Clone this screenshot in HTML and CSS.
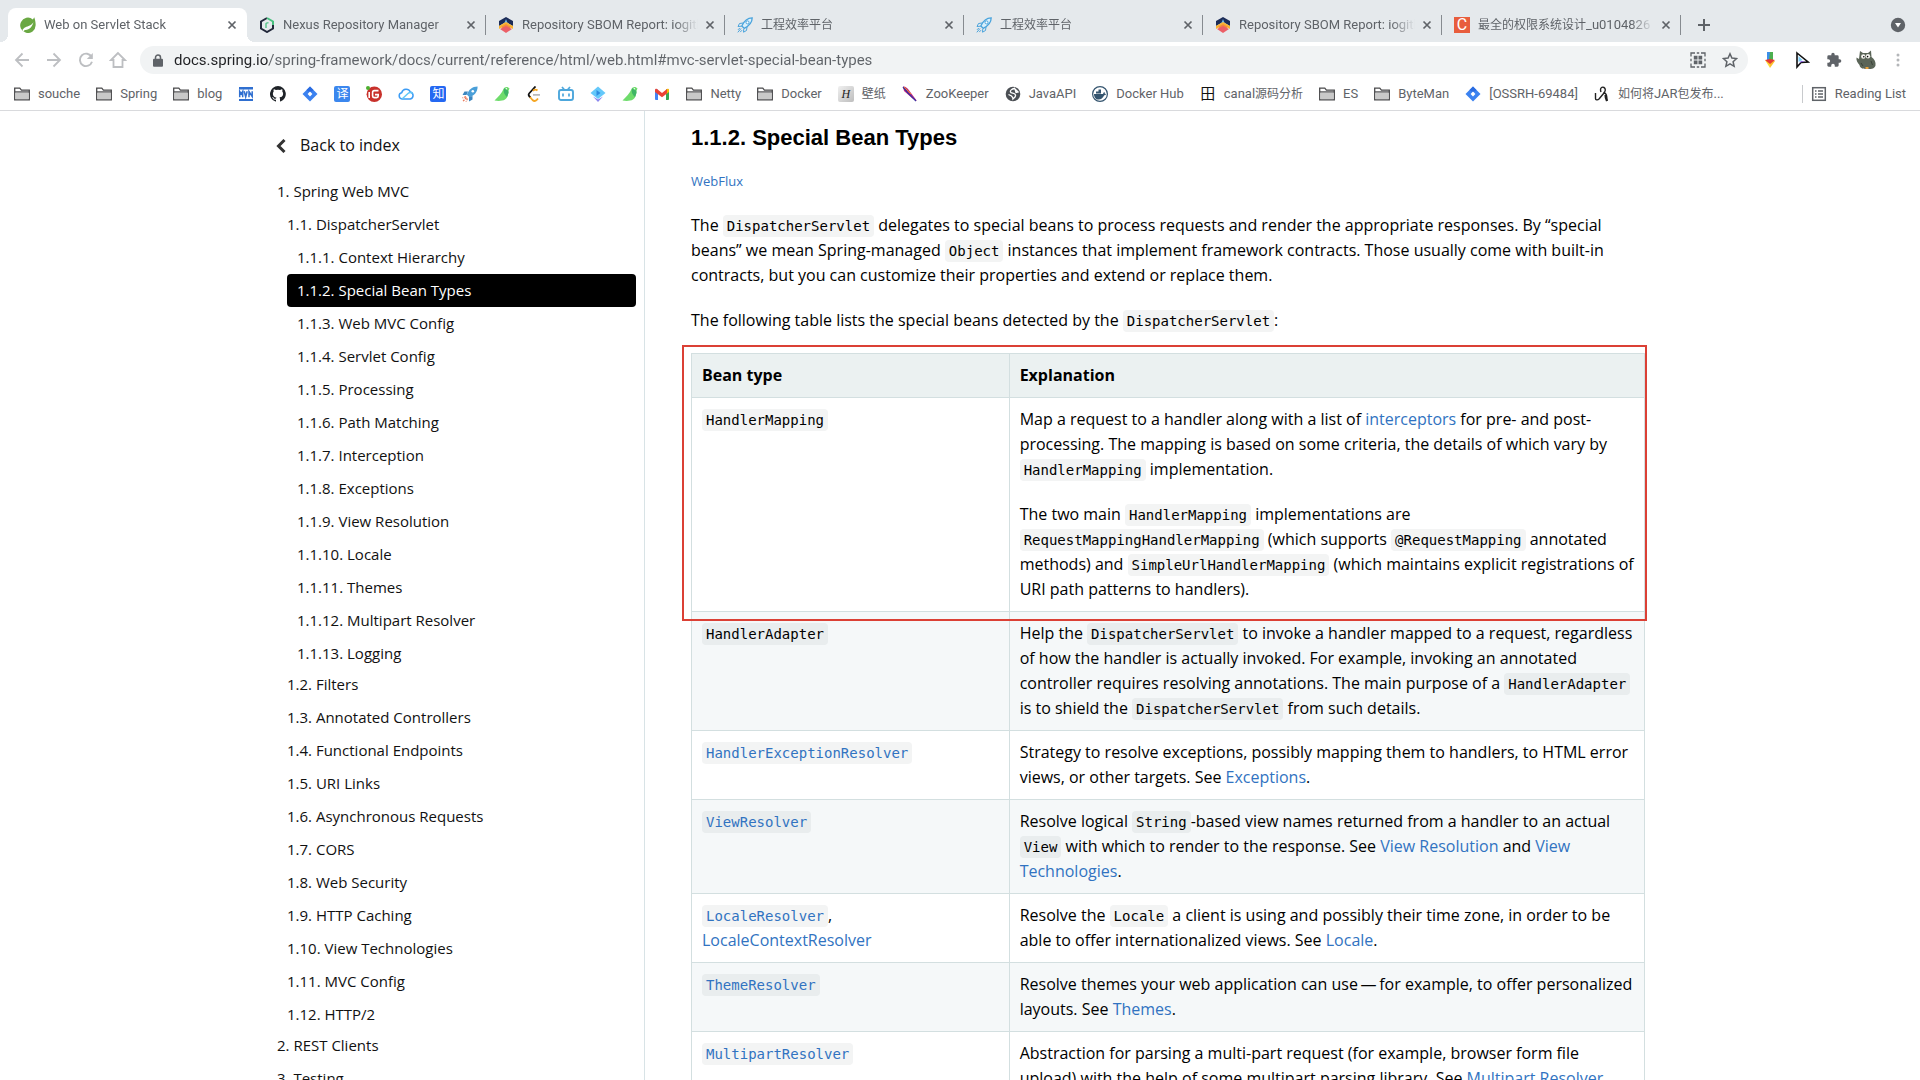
FILE: index.html
```html
<!DOCTYPE html>
<html lang="en">
<head>
    <meta charset="UTF-8">
    <meta name="viewport" content="width=device-width, initial-scale=1.0">
    <title>Web on Servlet Stack</title>
    <link rel="stylesheet" href="styles.css">
</head>
<body>

<!-- shared icons -->
<svg class="sprite" width="0" height="0" aria-hidden="true">
    <symbol id="close" viewBox="0 0 16 16"><path d="M4.500 4.500l7 7M11.500 4.500l-7 7" stroke="#5f6368" stroke-width="1.700" fill="none"/></symbol>
    <symbol id="folder" viewBox="0 0 16 16"><path d="M.7 13.800V2.200h5.100l1.600 1.900h7.900v9.700z" fill="#fff" stroke="#4a4a4c" stroke-width="1.300"/><path d="M1.500 6.500h13V13h-13z" fill="#c9c9c9"/><path d="M.7 5.900h14.600" stroke="#4a4a4c" stroke-width="1.200"/></symbol>
    <symbol id="sbom" viewBox="0 0 16 16"><path d="M8 0l7 4v5L8 5 1 9V4z" fill="#1c2c58"/><path d="M8 2l2 5H6z" fill="#6db5e8"/><path d="M1 9l7-4 7 4v3L8 8l-7 4z" fill="#fbb431"/><path d="M3 10l5-3 5 3-5 4z" fill="#f58a3c"/><path d="M2 12l6-3 6 3-6 4z" fill="#ec5f67"/></symbol>
    <symbol id="rocket-line" viewBox="0 0 16 16"><path d="M15.200.8C10 .8 7 4 4.800 9l2.400 2.300C12 9 15.200 6 15.200.8z" fill="#d9effb" stroke="#4aa3dc" stroke-width="1.300"/><circle cx="10.500" cy="5.400" r="1.500" fill="#fff" stroke="#4aa3dc"/><path d="M6 6L2.500 6.500 1 9.500l3.500-.3M10 10l-.5 3.500-3 1.700.3-3.500M4 11.500L.8 15.300M2.800 11L1 12.800M5 13.200l-1.800 1.900" fill="none" stroke="#4aa3dc"/></symbol>
    <symbol id="rocket" viewBox="0 0 16 16"><path d="M15.600.4C10 .4 7 3.500 4.800 8.500l2.700 2.700C12.500 9 15.600 6 15.600.4z" fill="#4a9fd8"/><path d="M6 5.500H2.500L.5 9h4zM10.500 10v3.500l-3.500 2V11z" fill="#3a86c0"/><circle cx="10.800" cy="5.200" r="1.300" fill="#fff"/><path d="M4 10.500L.5 12M5.500 12.500L4 15.800M4.500 11.500L1 15.200" stroke="#e87a5c" stroke-width="1.300" stroke-dasharray="2 1"/></symbol>
    <symbol id="diamond" viewBox="0 0 16 16"><path d="M8 .5L15.500 8 8 15.500.5 8z" fill="#3b82f0"/><path d="M8 .5l3.500 3.500L8 6.500 4.500 4z" fill="#2a6be0"/><path d="M8 5.600L10.400 8 8 10.400 5.600 8z" fill="#fff"/></symbol>
    <symbol id="dove" viewBox="0 0 16 16"><path d="M15.500 2.600C14 .3 10.500.5 9.500 3 8 7 4 11 .5 14.500c3.500.8 8 .6 10.500-1 2.800-1.800 3-5 3.500-8.800z" fill="#6fdc6c"/><path d="M10 2.500c2 0 5 2 4.500 4.500L13 11c-2-2-4-4-3-8.500z" fill="#3fb565"/><circle cx="12.300" cy="2.800" r=".7" fill="#fff"/></symbol>
</svg>

<header class="browser">
    <div class="tab-strip">
        <div class="tab active">
            <svg class="icon" viewBox="0 0 16 16"><path d="M14.200.3C13.800 1.200 13.300 1.900 12.800 2.400A7.700 7.700 0 1 0 15.600 8.500C15.800 6 15.200 3 14.200.3z" fill="#6aa843"/><path d="M2.500 12.900c5 .3 9-1 11-7.700C11.500 8.500 8 9 5.500 10.200c-1.500.8-2.300 1.600-3 2.700z" fill="#fff"/><circle cx="3.500" cy="13.500" r=".9" fill="#fff"/></svg>
            <button class="tab-title">Web on Servlet Stack</button>
            <button class="tab-close" aria-label="Close tab"><svg><use href="#close"/></svg></button>
        </div>
        <div class="tab">
            <svg class="icon" viewBox="0 0 16 16"><path d="M8 1L2 4.500v7L8 15l6-3.500v-4" fill="none" stroke="#22283a" stroke-width="2"/><path d="M8 1l6 3.500V8" fill="none" stroke="#48c07f" stroke-width="2"/><path d="M7 11V6.800c0-.6 1-1.200 2.500-.9" fill="none" stroke="#48c07f" stroke-width="1.300"/></svg>
            <button class="tab-title">Nexus Repository Manager</button>
            <button class="tab-close" aria-label="Close tab"><svg><use href="#close"/></svg></button>
        </div>
        <div class="tab">
            <svg class="icon"><use href="#sbom"/></svg>
            <button class="tab-title">Repository SBOM Report: iogith</button>
            <button class="tab-close" aria-label="Close tab"><svg><use href="#close"/></svg></button>
        </div>
        <div class="tab">
            <svg class="icon"><use href="#rocket-line"/></svg>
            <button class="tab-title zh">工程效率平台</button>
            <button class="tab-close" aria-label="Close tab"><svg><use href="#close"/></svg></button>
        </div>
        <div class="tab">
            <svg class="icon"><use href="#rocket-line"/></svg>
            <button class="tab-title zh">工程效率平台</button>
            <button class="tab-close" aria-label="Close tab"><svg><use href="#close"/></svg></button>
        </div>
        <div class="tab">
            <svg class="icon"><use href="#sbom"/></svg>
            <button class="tab-title">Repository SBOM Report: iogith</button>
            <button class="tab-close" aria-label="Close tab"><svg><use href="#close"/></svg></button>
        </div>
        <div class="tab">
            <span class="icon csdn">C</span>
            <button class="tab-title"><span class="zh">最全的权限系统设计</span>_u0104826</button>
            <button class="tab-close" aria-label="Close tab"><svg><use href="#close"/></svg></button>
        </div>
        <button class="new-tab" aria-label="New tab"><svg width="14" height="14" viewBox="0 0 14 14"><path d="M7 1v12M1 7h12" stroke="#5f6368" stroke-width="2"/></svg></button>
        <button class="tab-search" aria-label="Search tabs"><svg width="16" height="16" viewBox="0 0 16 16"><circle cx="8" cy="8" r="7.200" fill="#5f6368"/><path d="M5 6h6l-3 4.500z" fill="#fff"/></svg></button>
    </div>

    <div class="toolbar">
        <button class="tool" aria-label="Back"><svg width="16" height="16" viewBox="0 0 16 16"><path d="M15 8H2M8.500 1.500L2 8l6.500 6.500" fill="none" stroke="#bdbfc2" stroke-width="1.800"/></svg></button>
        <button class="tool" aria-label="Forward"><svg width="16" height="16" viewBox="0 0 16 16"><path d="M1 8h13M7.500 1.500L14 8l-6.500 6.500" fill="none" stroke="#bdbfc2" stroke-width="1.800"/></svg></button>
        <button class="tool" aria-label="Reload"><svg width="16" height="16" viewBox="0 0 16 16"><path d="M13.600 5A6.200 6.200 0 1 0 14 9.800" fill="none" stroke="#bdbfc2" stroke-width="1.900"/><path d="M14.800 1v6H8.800z" fill="#bdbfc2"/></svg></button>
        <button class="tool" aria-label="Home"><svg width="18" height="18" viewBox="0 0 18 18"><path d="M9 2L2 9h2.500v7h9V9H16z" fill="none" stroke="#bdbfc2" stroke-width="1.800"/></svg></button>
        <div class="omnibox">
            <svg class="lock" width="10" height="13" viewBox="0 0 10 13"><path d="M2.500 6V3.500a2.500 2.500 0 0 1 5 0V6" fill="none" stroke="#5f6368" stroke-width="1.500"/><rect y="4.800" width="10" height="8" rx="1" fill="#5f6368"/></svg>
            <input class="url" type="text" aria-label="Address" value="docs.spring.io/spring-framework/docs/current/reference/html/web.html#mvc-servlet-special-bean-types">
            <button class="tool" aria-label="QR code"><svg width="16" height="16" viewBox="0 0 16 16"><path d="M1 4.500V1h4M11 1h4v3.500M15 11.500V15h-4M5 15H1v-3.500M1 6.800v2.400M15 6.800v2.400M6.800 1h2.400M6.800 15h2.400" fill="none" stroke="#5f6368" stroke-width="1.300"/><path d="M3.800 3.800h3.700v3.700H3.800zM8.500 3.800h3.700v3.700H8.500zM3.800 8.500h3.700v3.700H3.800zM8.500 8.500h3.700v3.700H8.500z" fill="#5f6368"/></svg></button>
            <button class="tool" aria-label="Bookmark this tab"><svg width="16" height="16" viewBox="0 0 16 16"><path d="M8 1.800l1.900 4.300 4.700.5-3.500 3.100 1 4.600L8 11.900l-4.100 2.400 1-4.600L1.400 6.600l4.700-.5z" fill="none" stroke="#5f6368" stroke-width="1.500"/></svg></button>
        </div>
        <button class="tool" aria-label="Downloader"><svg width="16" height="18" viewBox="0 0 16 18"><path d="M5 1h3v9H5z" fill="#3b8eea"/><path d="M8 1h3v8H7z" fill="#4caf50"/><path d="M3 9l5 8v-6z" fill="#fdd835"/><path d="M8 17l5-7H8z" fill="#fbc02d"/><path d="M3 9l5 4 5-4-5-1z" fill="#e53935"/></svg></button>
        <button class="tool" aria-label="Cursor"><svg width="16" height="18" viewBox="0 0 16 18"><path d="M3 2l11 9-7 .5L3 16z" fill="#fff" stroke="#111" stroke-width="1.600"/><path d="M4.500 5v6l4-2z" fill="#7ecbf5"/><path d="M5 13l2-3 4 .5-4 .8z" fill="#8e5be8"/></svg></button>
        <button class="tool" aria-label="Extensions"><svg width="16" height="16" viewBox="0 0 24 24"><path d="M20.500 11H19V7a2 2 0 0 0-2-2h-4V3.500a2.500 2.500 0 0 0-5 0V5H4a2 2 0 0 0-2 2v3.800h1.500a2.700 2.700 0 0 1 0 5.400H2V20c0 1.100.9 2 2 2h3.800v-1.500a2.700 2.700 0 0 1 5.400 0V22H17a2 2 0 0 0 2-2v-4h1.500a2.500 2.500 0 0 0 0-5z" fill="#5f6368"/></svg></button>
        <button class="tool" aria-label="Profile"><svg width="20" height="20" viewBox="0 0 20 20"><path d="M4 1l3 2h5l3-2.500.5 6.500c3 2 4.500 5 4 8.500-1 3.500-5 3.700-8.500 3.500-4 0-7-.5-7.500-4C1.500 13 0 10 .5 7.500L3 9z" fill="#5b6558"/><circle cx="7.300" cy="6.500" r="2.200" fill="#f3f3ee"/><circle cx="12" cy="6.300" r="2.200" fill="#f3f3ee"/><circle cx="7.800" cy="6.700" r=".8"/><circle cx="11.600" cy="6.600" r=".8"/><path d="M5 13l2 3M15 11l1.500 4" stroke="#3a4238"/><path d="M9.500 17h3v2h-3z" fill="#e8a33d"/></svg></button>
        <button class="tool" aria-label="Menu"><svg width="16" height="16" viewBox="0 0 16 16" fill="#b4b6b9"><circle cx="8" cy="3" r="1.500"/><circle cx="8" cy="8" r="1.500"/><circle cx="8" cy="13" r="1.500"/></svg></button>
    </div>

    <nav class="bookmarks" aria-label="Bookmarks">
        <a href="#"><svg class="icon"><use href="#folder"/></svg>souche</a>
        <a href="#"><svg class="icon"><use href="#folder"/></svg>Spring</a>
        <a href="#"><svg class="icon"><use href="#folder"/></svg>blog</a>
        <a href="#" aria-label="MVN"><svg class="icon" viewBox="0 0 16 16"><path d="M1 1h14v2.500H1zM1 13h14v2H1z" fill="#2f6fd0"/><path d="M1.700 11.300V5.500L3.200 8l1.500-2.500v5.800M6.200 5.300l1.500 5.500 1.500-5.500M11 11.300V5.500l3.200 5V5.200" fill="none" stroke="#2f6fd0" stroke-width="1.500"/></svg></a>
        <a href="#" aria-label="GitHub"><svg class="icon" viewBox="0 0 16 16"><path d="M8 0a8 8 0 0 0-2.500 15.600c.4.100.5-.2.500-.4v-1.500c-2.200.5-2.700-.9-2.700-.9-.4-.9-.9-1.200-.9-1.200-.7-.5.100-.5.100-.5.800.1 1.200.8 1.200.8.700 1.300 1.900.9 2.300.7.100-.5.300-.9.500-1.100-1.800-.2-3.600-.9-3.600-4 0-.9.300-1.600.8-2.100-.1-.2-.4-1 .1-2.100 0 0 .7-.2 2.200.8a7.500 7.500 0 0 1 4 0c1.500-1 2.200-.8 2.200-.8.400 1.100.2 1.900.1 2.100.5.600.8 1.300.8 2.100 0 3.100-1.900 3.700-3.700 3.900.3.300.6.800.6 1.500v2.200c0 .2.100.5.600.4A8 8 0 0 0 8 0z" fill="#1f2328"/></svg></a>
        <a href="#" aria-label="Jira"><svg class="icon"><use href="#diamond"/></svg></a>
        <a href="#" aria-label="Translate"><span class="icon glyph translate">译</span></a>
        <a href="#" aria-label="Gitee"><svg class="icon" viewBox="0 0 16 16"><circle cx="8.300" cy="8.300" r="7.700" fill="#c8312b"/><circle cx="2" cy="2" r="2" fill="#4caf2f"/><path d="M12.500 4.600H8.300c-1 0-1.700.7-1.700 1.700v3.800c0 1 .7 1.500 1.500 1.500h2.600c.8 0 1.500-.6 1.500-1.500V8.600H9M3.200 6v6" fill="none" stroke="#fff" stroke-width="1.600"/></svg></a>
        <a href="#" aria-label="Cloud"><svg class="icon" viewBox="0 0 16 16"><path d="M4 13a3.200 3.200 0 0 1-.3-6.300A4.600 4.600 0 0 1 12.300 6a3.600 3.600 0 0 1 0 7z" fill="none" stroke="#3d9cf5" stroke-width="1.500"/><path d="M4 13l6-5.500c1.500-1.400 3.500-1.500 4.500 0" fill="none" stroke="#62c8f7" stroke-width="1.500"/></svg></a>
        <a href="#" aria-label="Zhihu"><span class="icon glyph zhihu">知</span></a>
        <a href="#" aria-label="Rocket"><svg class="icon"><use href="#rocket"/></svg></a>
        <a href="#" aria-label="Dove"><svg class="icon"><use href="#dove"/></svg></a>
        <a href="#" aria-label="LeetCode"><svg class="icon" viewBox="0 0 16 16"><path d="M9.500.5L3.500 7c-1.200 1.300-1 2.500 0 3.500l1 1" fill="none" stroke="#111" stroke-width="1.800"/><path d="M11.500 4.500c-1.500-1.200-3-1.200-4.500.3M4 11l2.500 3c1.300 1.200 3 1.200 4.500-.3l1-1.200" fill="none" stroke="#f5a623" stroke-width="1.800"/><path d="M7 8.900h7" stroke="#b3b3b3" stroke-width="1.600"/></svg></a>
        <a href="#" aria-label="Bilibili"><svg class="icon" viewBox="0 0 16 16"><rect x="1" y="4" width="14" height="10" rx="2" fill="none" stroke="#4da7dc" stroke-width="1.900"/><path d="M4 1l2.200 2.500M12 1L9.800 3.500M5 7.500v3M11 7.500v3" stroke="#4da7dc" stroke-width="1.700"/></svg></a>
        <a href="#" aria-label="Player"><svg class="icon" viewBox="0 0 16 16"><path d="M8 .5L15.500 7 8 13 .5 7z" fill="#64c8fa"/><path d="M3 10.500l5 3 5-3-5 5.500z" fill="#8a86ee"/><path d="M6.500 4l4 3-4 3z" fill="#2e8ce0"/></svg></a>
        <a href="#" aria-label="Dove"><svg class="icon"><use href="#dove"/></svg></a>
        <a href="#" aria-label="Gmail"><svg class="icon" viewBox="0 0 16 16"><path d="M1 3.500h3V14H2.200C1.500 14 1 13.500 1 13z" fill="#4285f4"/><path d="M12 3.500h3V13c0 .5-.5 1-1.200 1H12z" fill="#34a853"/><path d="M12 4l1-.9c1-.8 2 0 2 1V6l-3 2.300z" fill="#fbbc04"/><path d="M4 8.300L1 6V4c0-1 1-1.800 2-1l5 4 5-4v4.500l-5 3.700z" fill="#ea4335"/></svg></a>
        <a href="#"><svg class="icon"><use href="#folder"/></svg>Netty</a>
        <a href="#"><svg class="icon"><use href="#folder"/></svg>Docker</a>
        <a href="#" class="zh"><span class="icon glyph haowallpaper">H</span>壁纸</a>
        <a href="#"><svg class="icon" viewBox="0 0 16 16"><path d="M1 1c1-1 3 0 5 2l9 12-5-3L2 5z" fill="#c0267e"/><path d="M1 1l5 6 8 8" fill="none" stroke="#3c2fa0" stroke-width="1.300"/><path d="M2 1l7 7" stroke="#f5821f"/></svg>ZooKeeper</a>
        <a href="#"><svg class="icon" viewBox="0 0 16 16"><circle cx="8" cy="8" r="7.300" fill="#4b4f54"/><path d="M9.500 2.500C6.500 3 5 4.500 5.500 6s4.500 1 5 3-1.500 3-2.500 4c0-1.500-.5-2-1.500-3L3.500 8.500M10 3l3 3-2 .5z" fill="none" stroke="#fff" stroke-width="1.300"/></svg>JavaAPI</a>
        <a href="#"><svg class="icon" viewBox="0 0 16 16"><circle cx="8" cy="8" r="7.400" fill="#fff" stroke="#35556f" stroke-width="1.200"/><path d="M2 8h9c.2-1 .7-1.600 1.200-2 .6.500.8 1.200.6 1.800l1.400.2c-.4 1-1.300 1.200-2 1.200C11 12 9 13.500 6.500 13.500 4 13.500 2 11.500 2 8zM4 5.500h5v2H4zM6.500 3.500H9v2H6.500z" fill="#35556f"/></svg>Docker Hub</a>
        <a href="#"><span class="icon glyph canal">田</span><span>canal<span class="zh">源码分析</span></span></a>
        <a href="#"><svg class="icon"><use href="#folder"/></svg>ES</a>
        <a href="#"><svg class="icon"><use href="#folder"/></svg>ByteMan</a>
        <a href="#"><svg class="icon"><use href="#diamond"/></svg>[OSSRH-69484]</a>
        <a href="#"><svg class="icon" viewBox="0 0 16 16"><path d="M1.500 7v5.500c0 1.500 2 2 3.500.5l5-6M7 6c-1.500-4 1-5.500 3-4.500s1.500 4.500-.5 5.500c3-.5 3.500 3 3.500 8" fill="none" stroke="#222" stroke-width="1.400"/><path d="M11.500 9c0 2 .5 4 1.500 6" stroke="#222" stroke-width="2.200"/></svg><span><span class="zh">如何将</span>JAR<span class="zh">包发布</span>...</span></a>
        <a class="reading-list" href="#"><svg class="icon" viewBox="0 0 16 16"><rect x="1.700" y="1.700" width="12.600" height="12.600" fill="none" stroke="#5f6368" stroke-width="1.500"/><path d="M4 5h1.500M7 5h5M4 8h1.500M7 8h5M4 11h1.500M7 11h5" stroke="#5f6368" stroke-width="1.500"/></svg>Reading List</a>
    </nav>
</header>

<div class="page">
    <aside class="sidebar">
        <a class="back" href="#"><svg width="10" height="14" viewBox="0 0 10 14"><path d="M8.500 1L2.500 7l6 6" fill="none" stroke="#333" stroke-width="3"/></svg>Back to index</a>
        <ul class="toc">
            <li><a href="#">1. Spring Web MVC</a>
                <ul>
                    <li><a href="#">1.1. DispatcherServlet</a>
                        <ul>
                            <li><a href="#">1.1.1. Context Hierarchy</a></li>
                            <li><a class="current" href="#">1.1.2. Special Bean Types</a></li>
                            <li><a href="#">1.1.3. Web MVC Config</a></li>
                            <li><a href="#">1.1.4. Servlet Config</a></li>
                            <li><a href="#">1.1.5. Processing</a></li>
                            <li><a href="#">1.1.6. Path Matching</a></li>
                            <li><a href="#">1.1.7. Interception</a></li>
                            <li><a href="#">1.1.8. Exceptions</a></li>
                            <li><a href="#">1.1.9. View Resolution</a></li>
                            <li><a href="#">1.1.10. Locale</a></li>
                            <li><a href="#">1.1.11. Themes</a></li>
                            <li><a href="#">1.1.12. Multipart Resolver</a></li>
                            <li><a href="#">1.1.13. Logging</a></li>
                        </ul>
                    </li>
                    <li><a href="#">1.2. Filters</a></li>
                    <li><a href="#">1.3. Annotated Controllers</a></li>
                    <li><a href="#">1.4. Functional Endpoints</a></li>
                    <li><a href="#">1.5. URI Links</a></li>
                    <li><a href="#">1.6. Asynchronous Requests</a></li>
                    <li><a href="#">1.7. CORS</a></li>
                    <li><a href="#">1.8. Web Security</a></li>
                    <li><a href="#">1.9. HTTP Caching</a></li>
                    <li><a href="#">1.10. View Technologies</a></li>
                    <li><a href="#">1.11. MVC Config</a></li>
                    <li><a href="#">1.12. HTTP/2</a></li>
                </ul>
            </li>
            <li><a href="#">2. REST Clients</a></li>
            <li><a href="#">3. Testing</a></li>
        </ul>
    </aside>

    <main class="content">
        <h4>1.1.2. Special Bean Types</h4>
        <p class="small"><a href="#">WebFlux</a></p>
        <p>The <code>DispatcherServlet</code> delegates to special beans to process requests and render the appropriate responses. By “special beans” we mean Spring-managed <code>Object</code> instances that implement framework contracts. Those usually come with built-in contracts, but you can customize their properties and extend or replace them.</p>
        <p>The following table lists the special beans detected by the <code>DispatcherServlet</code>:</p>

        <div class="table-wrap">
            <div class="highlight"></div>
            <table>
                <colgroup>
                    <col class="col-type">
                    <col class="col-text">
                </colgroup>
                <thead>
                    <tr><th>Bean type</th><th>Explanation</th></tr>
                </thead>
                <tbody>
                    <tr>
                        <td><code>HandlerMapping</code></td>
                        <td>
                            <p>Map a request to a handler along with a list of <a href="#">interceptors</a> for pre- and post-processing. The mapping is based on some criteria, the details of which vary by <code>HandlerMapping</code> implementation.</p>
                            <p>The two main <code>HandlerMapping</code> implementations are <code>RequestMappingHandlerMapping</code> (which supports <code>@RequestMapping</code> annotated methods) and <code>SimpleUrlHandlerMapping</code> (which maintains explicit registrations of URI path patterns to handlers).</p>
                        </td>
                    </tr>
                    <tr>
                        <td><code>HandlerAdapter</code></td>
                        <td>Help the <code>DispatcherServlet</code> to invoke a handler mapped to a request, regardless of how the handler is actually invoked. For example, invoking an annotated controller requires resolving annotations. The main purpose of a <code>HandlerAdapter</code> is to shield the <code>DispatcherServlet</code> from such details.</td>
                    </tr>
                    <tr>
                        <td><a href="#"><code>HandlerExceptionResolver</code></a></td>
                        <td>Strategy to resolve exceptions, possibly mapping them to handlers, to HTML error views, or other targets. See <a href="#">Exceptions</a>.</td>
                    </tr>
                    <tr>
                        <td><a href="#"><code>ViewResolver</code></a></td>
                        <td>Resolve logical <code>String</code>-based view names returned from a handler to an actual <code>View</code> with which to render to the response. See <a href="#">View Resolution</a> and <a href="#">View Technologies</a>.</td>
                    </tr>
                    <tr>
                        <td><a href="#"><code>LocaleResolver</code></a>, <a href="#">LocaleContextResolver</a></td>
                        <td>Resolve the <code>Locale</code> a client is using and possibly their time zone, in order to be able to offer internationalized views. See <a href="#">Locale</a>.</td>
                    </tr>
                    <tr>
                        <td><a href="#"><code>ThemeResolver</code></a></td>
                        <td>Resolve themes your web application can use&#8201;&#8212;&#8201;for example, to offer personalized layouts. See <a href="#">Themes</a>.</td>
                    </tr>
                    <tr>
                        <td><a href="#"><code>MultipartResolver</code></a></td>
                        <td>Abstraction for parsing a multi-part request (for example, browser form file upload) with the help of some multipart parsing library. See <a href="#">Multipart Resolver</a>.</td>
                    </tr>
                </tbody>
            </table>
        </div>
    </main>
</div>

</body>
</html>
```
FILE: styles.css
```css
* {
    box-sizing: border-box;
}
body {
    display: flex;
    flex-direction: column;
    height: 100vh;
    margin: 0;
    overflow: hidden;
    background: #fff;
    color: #000;
    font-family: "Open Sans", "Noto Sans CJK SC", sans-serif;
    font-size: 16px;
    line-height: 25px;
}
a {
    color: #3173c1;
    text-decoration: none;
}
button {
    padding: 0;
    border: none;
    background: none;
    font: inherit;
    color: inherit;
    cursor: pointer;
}
svg {
    display: block;
}
.sprite {
    position: absolute;
}
.icon {
    flex: none;
    width: 16px;
    height: 16px;
}

/* browser window */
.browser {
    flex: none;
    border-bottom: 1px solid #d9dadd;
    color: #5f6368;
    font-family: Roboto, "Noto Sans CJK SC", sans-serif;
    font-size: 13px;
    line-height: 18px;
}
.tab-strip {
    display: flex;
    height: 42px;
    padding: 8px 14px 0 8px;
    background: #e5e9ec;
}
.tab {
    position: relative;
    display: flex;
    flex: 0 1 239px;
    align-items: center;
    gap: 8px;
    min-width: 0;
    padding: 0 7px 0 12px;
}
.tab:not(.active)::after {
    content: "";
    position: absolute;
    top: 7px;
    right: 0;
    width: 1px;
    height: 20px;
    background: #868b90;
}
.tab.active {
    border-radius: 8px 8px 0 0;
    background: #fff;
}
.tab.active::before,
.tab.active::after {
    content: "";
    position: absolute;
    bottom: 0;
    width: 8px;
    height: 8px;
}
.tab.active::before {
    left: -8px;
    background: radial-gradient(circle at 0 0, #e5e9ec 8px, #fff 8px);
}
.tab.active::after {
    right: -8px;
    background: radial-gradient(circle at 100% 0, #e5e9ec 8px, #fff 8px);
}
.tab-title {
    flex: 1;
    min-width: 0;
    margin-right: -4px;
    overflow: hidden;
    text-align: left;
    white-space: nowrap;
    mask-image: linear-gradient(to left, transparent, #000 24px);
}
.zh {
    font-size: 12px;
}
.tab-close,
.tab-close svg {
    width: 16px;
    height: 16px;
}
.csdn {
    background: #e85d3d;
    color: #fff;
    font-size: 16px;
    line-height: 16px;
    text-align: center;
}
.new-tab {
    margin-left: 16px;
}
.tab-search {
    margin-left: auto;
}
.toolbar {
    display: flex;
    align-items: center;
    height: 36px;
    padding: 0 6px;
}
.tool {
    display: flex;
    flex: none;
    align-items: center;
    justify-content: center;
    width: 32px;
    height: 28px;
}
.omnibox {
    display: flex;
    flex: 1;
    align-items: center;
    height: 28px;
    margin: 0 6px;
    padding: 0 2px 0 13px;
    border-radius: 14px;
    background: #f1f3f4;
}
.url {
    flex: 1;
    margin-left: 11px;
    padding: 0;
    border: none;
    outline: none;
    background: linear-gradient(to right, #202124 95px, #5f6368 95px);
    background-clip: text;
    color: transparent;
    font: 15px/20px Roboto, sans-serif;
}
.bookmarks {
    display: flex;
    align-items: center;
    height: 32px;
    padding: 0 6px;
}
.bookmarks a {
    display: flex;
    flex: none;
    align-items: center;
    gap: 8px;
    padding: 0 8px;
    color: #5f6368;
}
.bookmarks .reading-list {
    margin-left: auto;
    border-left: 1px solid #c8cacd;
}
.glyph {
    border-radius: 2px;
    color: #fff;
    font-size: 12px;
    line-height: 16px;
    text-align: center;
}
.translate {
    background: #3b87ee;
}
.zhihu {
    background: #2468f2;
}
.haowallpaper {
    background: linear-gradient(135deg, #f0f0f0, #bdbdbd);
    color: #222;
    font-family: "Liberation Serif", serif;
    font-style: italic;
}
.canal {
    color: #111;
    font-size: 15px;
}

/* documentation page */
.page {
    display: flex;
    flex: 1;
    width: 100%;
    max-width: 1386px;
    min-height: 0;
    margin: 0 auto;
}
.sidebar {
    flex: none;
    width: 378px;
    padding: 22px 8px 0 0;
    border-right: 1px solid #d8e3e6;
    overflow: hidden;
}
.back {
    display: flex;
    align-items: center;
    gap: 14px;
    margin-bottom: 17px;
    padding-left: 9px;
    color: #111;
}
.toc,
.toc ul {
    margin: 0;
    padding: 0;
    list-style: none;
}
.toc ul {
    margin: 0 0 -2px 10px;
}
.toc a {
    display: block;
    padding: 4px 10px;
    border-radius: 4px;
    color: #111;
    font-size: 15px;
}
.toc .current {
    background: #000;
    color: #fff;
}
.content {
    flex: 1;
    min-width: 0;
    padding: 13px 8px 0 46px;
}
h4 {
    margin: 0 0 19px;
    font: bold 22px/28px "Liberation Sans", sans-serif;
}
p {
    margin: 0 0 20px;
}
.small {
    margin-bottom: 22px;
    font-size: 13px;
    line-height: 20px;
}
code {
    padding: 3px 4px;
    border-radius: 4px;
    background: rgba(27, 31, 35, 0.05);
    font-family: "DejaVu Sans Mono", monospace;
    font-size: 14px;
    line-height: 16px;
}
.table-wrap {
    position: relative;
}
table {
    width: 100%;
    border-collapse: collapse;
    table-layout: fixed;
}
.col-type {
    width: 33.3333%;
}
th,
td {
    padding: 9px 8px 9px 10px;
    border: 1px solid #d3dfe0;
    text-align: left;
    vertical-align: top;
}
th {
    background: #ebf1f1;
}
td p:last-child {
    margin-bottom: 0;
}
tbody tr:nth-child(even) {
    background: #f5f8f9;
}
/* red frame round the first bean */
.highlight {
    position: absolute;
    top: -8px;
    right: -2px;
    left: -9px;
    height: 276px;
    border: 2px solid #db4035;
    pointer-events: none;
}
```
